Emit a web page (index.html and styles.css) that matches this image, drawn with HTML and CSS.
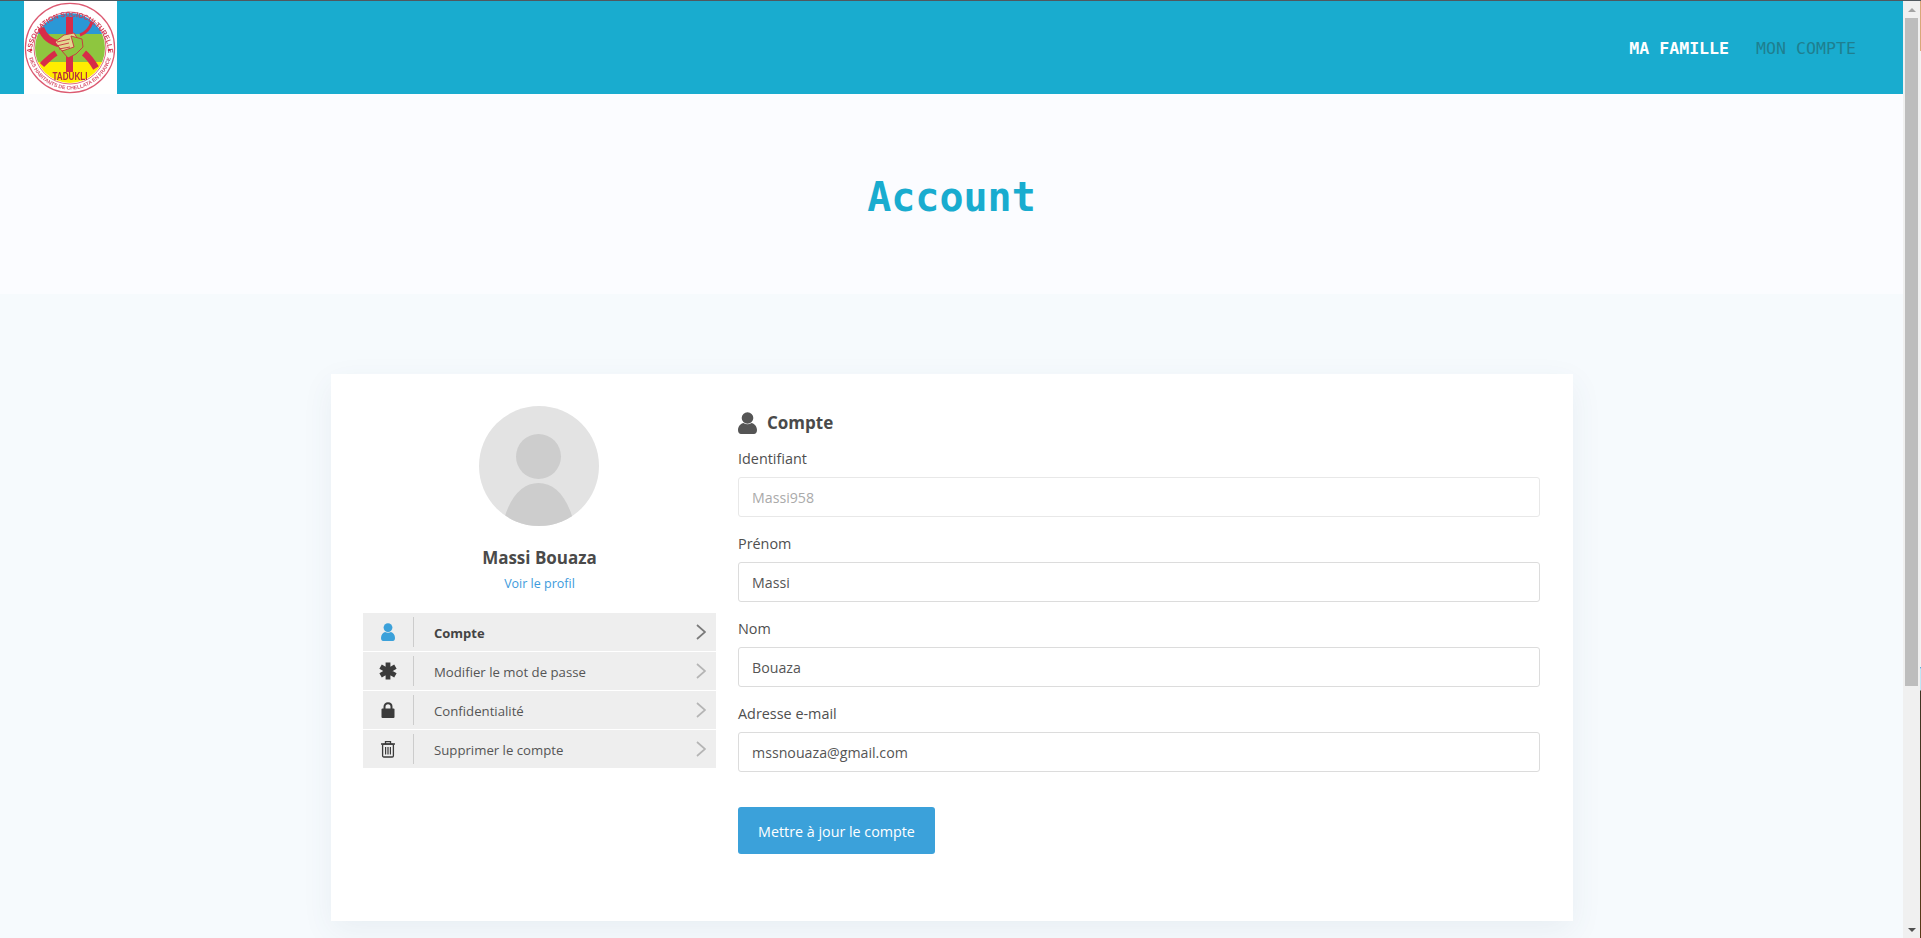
FILE: index.html
```html
<!DOCTYPE html>
<html lang="fr">
<head>
<meta charset="utf-8">
<title>Account</title>
<link rel="stylesheet" href="styles.css">
</head>
<body>
<div class="window">
  <div class="page">
    <header class="topbar">
      <a class="logo" href="#">
        <svg viewBox="0 0 93 93" width="93" height="93">
          <defs>
            <clipPath id="disc"><circle cx="46" cy="47" r="35"/></clipPath>
            <path id="arcTop" d="M7.5 54 A38.5 38.5 0 1 1 84.5 54"/>
            <path id="arcBot" d="M4.5 53 A42 42 0 0 0 87.5 53"/>
          </defs>
          <rect width="93" height="93" fill="#fff"/>
          <circle cx="46" cy="47" r="44.6" fill="none" stroke="#dc5a72" stroke-width="1.2"/>
          <circle cx="46" cy="47" r="36" fill="none" stroke="#dc5a72" stroke-width="0.9"/>
          <g clip-path="url(#disc)">
            <rect x="0" y="0" width="93" height="33" fill="#2a98d6"/>
            <rect x="0" y="33" width="93" height="28" fill="#8ec63f"/>
            <rect x="0" y="61" width="93" height="32" fill="#ffed00"/>
          </g>
          <g fill="none" stroke="#d72c48" stroke-linecap="butt">
            <path d="M45.5 16V71" stroke-width="7"/>
            <path d="M17 27C20 36 26 41 36 43" stroke-width="6.5"/>
            <path d="M68 21C66 27 62 32 56 34" stroke-width="3"/>
            <path d="M18 64C22 60 27 55 32 52" stroke-width="6"/>
            <path d="M72 67C69 62 65 56 60 52" stroke-width="6.5"/>
          </g>
          <path d="M31 41L40 34L50 32L55 40L50 50L38 50Z" fill="#e3d78f" stroke="#c9303f" stroke-width="0.9"/>
          <path d="M47 35L58 38L59 46L52 53L44 57L38 50L50 46Z" fill="#8ec63f" stroke="#c9303f" stroke-width="0.9"/>
          <path d="M33 41L46 38M32 45L45 42M35 48L46 46" stroke="#c9303f" stroke-width="0.9" fill="none"/>
          <text class="logo-name" x="46" y="79" text-anchor="middle" textLength="35" lengthAdjust="spacingAndGlyphs">TADUKLI</text>
          <text class="logo-ring"><textPath href="#arcTop" startOffset="50%" text-anchor="middle">ASSOCIATION SOCIOCULTURELLE</textPath></text>
          <text class="logo-ring-small"><textPath href="#arcBot" startOffset="50%" text-anchor="middle">DES HABITANTS DE CHELLATA EN FRANCE</textPath></text>
          <circle cx="7" cy="49" r="1.3" fill="#d72c48"/>
          <circle cx="85" cy="49" r="1.3" fill="#d72c48"/>
        </svg>
      </a>
      <nav class="topnav">
        <a class="topnav-link is-current" href="#">MA FAMILLE</a>
        <a class="topnav-link" href="#">MON COMPTE</a>
      </nav>
    </header>

    <section class="hero"><h1 class="hero-title">Account</h1></section>

    <main class="content">
      <div class="card">
        <aside class="side">
          <svg class="avatar" viewBox="0 0 120 120" width="120" height="120">
            <defs><clipPath id="avatarClip"><circle cx="60" cy="60" r="60"/></clipPath></defs>
            <circle cx="60" cy="60" r="60" fill="#e3e3e3"/>
            <g clip-path="url(#avatarClip)" fill="#cdcdcd">
              <circle cx="59.5" cy="50.5" r="22.5"/>
              <path d="M26 110C33 88 45 77 59.5 77C74 77 86 88 93 110V125H26Z"/>
            </g>
          </svg>
          <div class="side-name">Massi Bouaza</div>
          <a class="side-link" href="#">Voir le profil</a>
          <ul class="menu">
            <li class="menu-row is-active">
              <span class="menu-icon">
                <svg viewBox="0 0 14 18" width="14" height="18"><circle cx="7" cy="4.6" r="4.4" fill="currentColor"/><path d="M0 15C0 11.5 2 9.6 4 9C5.8 10.1 8.2 10.1 10 9C12 9.6 14 11.5 14 15C14 17 13 18 12 18H2C1 18 0 17 0 15Z" fill="currentColor"/></svg>
              </span>
              <span class="menu-label">Compte</span>
              <svg class="chevron" viewBox="0 0 10 16" width="10" height="16"><path d="M1 1L9 8L1 15" fill="none" stroke="currentColor" stroke-width="1.7"/></svg>
            </li>
            <li class="menu-row">
              <span class="menu-icon">
                <svg viewBox="0 0 18 18" width="18" height="18"><path d="M9 0.5V17.5M1.6 4.7L16.4 13.3M16.4 4.7L1.6 13.3" fill="none" stroke="currentColor" stroke-width="4.8"/></svg>
              </span>
              <span class="menu-label">Modifier le mot de passe</span>
              <svg class="chevron" viewBox="0 0 10 16" width="10" height="16"><path d="M1 1L9 8L1 15" fill="none" stroke="currentColor" stroke-width="1.7"/></svg>
            </li>
            <li class="menu-row">
              <span class="menu-icon">
                <svg viewBox="0 0 14 16" width="14" height="16"><path d="M3.5 7V4.7C3.5 2.6 5 1.2 7 1.2C9 1.2 10.5 2.6 10.5 4.7V7" fill="none" stroke="currentColor" stroke-width="2"/><rect x="0.5" y="6.6" width="13" height="9.4" rx="1" fill="currentColor"/></svg>
              </span>
              <span class="menu-label">Confidentialité</span>
              <svg class="chevron" viewBox="0 0 10 16" width="10" height="16"><path d="M1 1L9 8L1 15" fill="none" stroke="currentColor" stroke-width="1.7"/></svg>
            </li>
            <li class="menu-row">
              <span class="menu-icon">
                <svg viewBox="0 0 16 18" width="16" height="18"><path d="M1 4H15M5.5 3.6V1.6H10.5V3.6" fill="none" stroke="currentColor" stroke-width="1.3"/><rect x="2.6" y="4.2" width="10.8" height="12.8" rx="1.2" fill="none" stroke="currentColor" stroke-width="1.3"/><path d="M5.6 7V14.4M8 7V14.4M10.4 7V14.4" fill="none" stroke="currentColor" stroke-width="1.2"/></svg>
              </span>
              <span class="menu-label">Supprimer le compte</span>
              <svg class="chevron" viewBox="0 0 10 16" width="10" height="16"><path d="M1 1L9 8L1 15" fill="none" stroke="currentColor" stroke-width="1.7"/></svg>
            </li>
          </ul>
        </aside>

        <form class="form">
          <h2 class="form-title">
            <svg viewBox="0 0 19 22" width="19" height="22"><circle cx="9.5" cy="6" r="5.8" fill="currentColor"/><path d="M0 18C0 14.2 2.8 11.7 5.5 11C8 12.6 11 12.6 13.5 11C16.2 11.7 19 14.2 19 18C19 20.8 17.6 22 16 22H3C1.4 22 0 20.8 0 18Z" fill="currentColor"/></svg>
            <span>Compte</span>
          </h2>
          <label class="field"><span class="field-label">Identifiant</span><input class="field-input is-disabled" type="text" value="Massi958" disabled></label>
          <label class="field"><span class="field-label">Prénom</span><input class="field-input" type="text" value="Massi"></label>
          <label class="field"><span class="field-label">Nom</span><input class="field-input" type="text" value="Bouaza"></label>
          <label class="field"><span class="field-label">Adresse e-mail</span><input class="field-input" type="text" value="mssnouaza@gmail.com"></label>
          <button class="submit" type="button">Mettre à jour le compte</button>
        </form>
      </div>
    </main>
  </div>

  <div class="scrollbar">
    <span class="scroll-arrow is-up"></span>
    <span class="scroll-track"><span class="scroll-thumb"></span></span>
    <span class="scroll-arrow is-down"></span>
  </div>
  <div class="behind"></div>
</div>
</body>
</html>
```
FILE: styles.css
```css
* { box-sizing: border-box; }
html, body { margin: 0; height: 100%; overflow: hidden; }
body {
  font-family: "Open Sans", "Noto Sans", "Liberation Sans", sans-serif;
  color: #555;
  background: #f6fafd;
  border-top: 1px solid #50585e;
}
a { text-decoration: none; }

.window { display: flex; height: 937px; }
.page { width: 1903px; flex: none; overflow: hidden; }

.topbar {
  height: 93px;
  background: #19accf;
  display: flex;
  justify-content: space-between;
  padding: 0 47px 0 24px;
}
.logo { display: block; width: 93px; height: 93px; }
.logo svg { display: block; filter: blur(0.3px); }
.logo-name { font: 700 10.5px "Liberation Sans", sans-serif; fill: #b5293d; }
.logo-ring { font: 700 6.9px "Liberation Sans", sans-serif; fill: #d23a55; }
.logo-ring-small { font: 700 5.2px "Liberation Sans", sans-serif; fill: #d8566f; }

.topnav { display: flex; gap: 27px; align-items: center; padding-top: 2px; }
.topnav-link {
  font-family: "DejaVu Sans Mono", "Liberation Mono", monospace;
  font-size: 16.6px;
  color: #1f7f90;
}
.topnav-link.is-current { color: #fff; font-weight: 700; }

.hero {
  height: 200px;
  background: #fbfcff;
  display: flex;
  justify-content: center;
  padding-top: 75px;
}
.hero-title {
  margin: 0;
  font-family: "DejaVu Sans Mono", "Liberation Mono", monospace;
  font-size: 40px;
  line-height: 56px;
  font-weight: 700;
  color: #19accf;
}

.content { padding: 80px 330px 0 331px; }
.card {
  width: 1242px;
  height: 547px;
  background: #fff;
  box-shadow: 0 10px 30px rgba(60, 80, 110, 0.07);
  display: flex;
  gap: 22px;
  padding: 32px 33px 0 32px;
}

.side { width: 353px; flex: none; display: flex; flex-direction: column; align-items: center; }
.avatar { display: block; margin-left: -1px; }
.side-name { margin-top: 20px; font-size: 17px; line-height: 24px; font-weight: 700; color: #4a4a4a; }
.side-link { margin-top: 5px; font-size: 12.5px; line-height: 18px; color: #3d9bdc; }

.menu { list-style: none; margin: 20px 0 0; padding: 0; width: 100%; display: flex; flex-direction: column; gap: 1px; }
.menu-row {
  height: 38px;
  background: #eee;
  display: flex;
  align-items: center;
  font-size: 13.2px;
  color: #555;
  padding-right: 10px;
}
.menu-row.is-active { font-weight: 700; font-size: 13px; color: #444; }
.menu-icon {
  width: 51px;
  height: 30px;
  flex: none;
  border-right: 1px solid #ccc;
  display: flex;
  align-items: center;
  justify-content: center;
  color: #3b3b3b;
}
.is-active .menu-icon { color: #3ba1da; }
.menu-label { flex: 1; padding: 2px 0 0 20px; }
.chevron { color: #b5b5b5; flex: none; }
.is-active .chevron { color: #7a7a7a; }

.form { flex: 1; min-width: 0; display: flex; flex-direction: column; }
.form-title {
  margin: 4px 0 0;
  height: 25px;
  display: flex;
  align-items: center;
  gap: 10px;
  font-size: 17px;
  font-weight: 700;
  color: #4a4a4a;
}
.form-title svg { color: #555; flex: none; }
.field { display: block; margin-bottom: 13px; }
.form-title + .field { margin-top: 10px; }
.field-label { display: block; height: 32px; padding-top: 3px; font-size: 14.4px; line-height: 22px; font-weight: 500; color: #4f4f4f; }
.field-input {
  display: block;
  width: 100%;
  height: 40px;
  border: 1px solid #dcdcdc;
  border-radius: 3px;
  background: #fff;
  padding: 0 13px;
  font: 14.2px "Open Sans", "Noto Sans", sans-serif;
  color: #555;
  outline: none;
}
.field-input.is-disabled { border-color: #e8e8e8; color: #aaa; }
.submit {
  align-self: flex-start;
  margin-top: 22px;
  width: 197px;
  height: 47px;
  border: 0;
  border-radius: 3px;
  background: #3ba1da;
  color: #fff;
  padding-top: 2px;
  font: 14.3px "Open Sans", "Noto Sans", sans-serif;
}

.scrollbar { width: 17px; flex: none; background: #f0f0f0; display: flex; flex-direction: column; }
.scroll-arrow { height: 17px; flex: none; display: flex; align-items: center; justify-content: center; }
.scroll-arrow::before { content: ""; border-left: 4px solid transparent; border-right: 4px solid transparent; }
.scroll-arrow.is-up::before { border-bottom: 4px solid #a3a3a3; }
.scroll-arrow.is-down::before { border-top: 4px solid #505050; }
.scroll-track { flex: 1; padding: 0 2px; }
.scroll-thumb { display: block; height: 668px; background: #bdbdbd; }

.behind {
  width: 1px;
  flex: none;
  background: linear-gradient(to bottom, #d8a878 0, #d8a878 50px, #f2f2f2 50px, #f2f2f2 666px, #3a9bd8 666px, #bfe6f5 668px, #bfe6f5 689px, #3d3422 690px, #5a3a18 937px);
}
```
